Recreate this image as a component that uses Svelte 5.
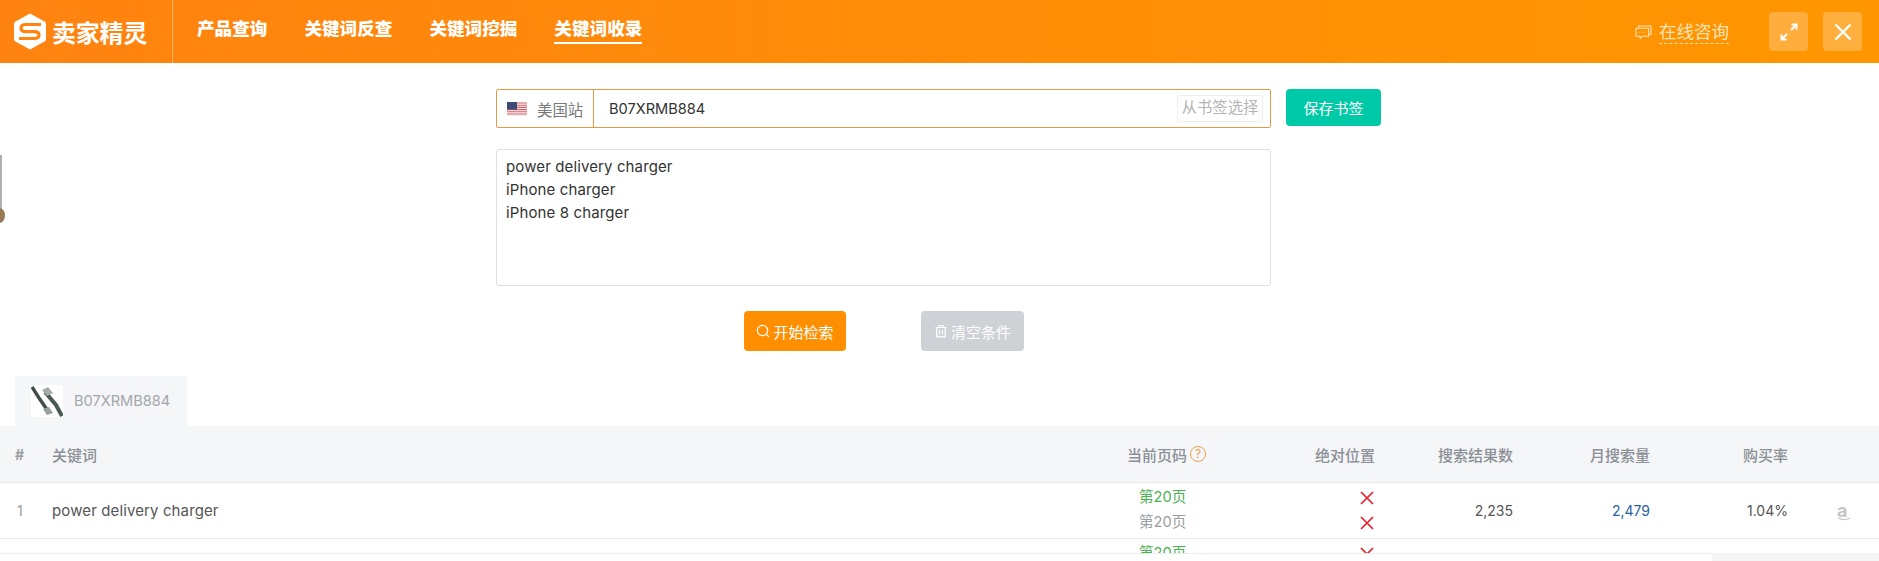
<script>
  const navItems = ['产品查询', '关键词反查', '关键词挖掘', '关键词收录'];
  const activeNav = '关键词收录';
  const keywords = ['power delivery charger', 'iPhone charger', 'iPhone 8 charger'];
</script>

<div class="page">
  <span class="edge-mark"></span>

  <header class="topbar">
    <div class="brand">
      <svg class="logo" viewBox="0 0 32 37" width="32" height="37">
        <path d="M16 0.5 L30.5 8.5 Q32 9.4 32 11 V26 Q32 27.6 30.5 28.5 L16 36.5 L1.5 28.5 Q0 27.6 0 26 V11 Q0 9.4 1.5 8.5 Z" fill="#fff" />
        <path d="M27 11.5 H12 Q7 11.5 7 15.2 Q7 18.6 12 18.6 H20 Q25 18.6 25 22 Q25 25.5 20 25.5 H5" fill="none" stroke="#ff8410" stroke-width="3.2" />
      </svg>
      <span class="brand-name">卖家精灵</span>
    </div>
    <nav class="nav">
      {#each navItems as item}
        <span class="nav-item" class:active={item === activeNav}>{item}</span>
      {/each}
    </nav>
    <div class="top-right">
      <svg class="chat" viewBox="0 0 17 15" width="17" height="15" fill="none" stroke="#ffe3b8" stroke-width="1.1">
        <path d="M3.5 3 V1 H16 V9.5 H14" />
        <path d="M1 3.2 H13.6 V11.2 H7 L5.4 13.4 L4.6 11.2 H1 Z" />
        <path d="M4 7.2 H10.6" stroke-dasharray="1 1.6" />
      </svg>
      <span class="consult">在线咨询</span>
      <button class="square-btn first" aria-label="expand">
        <svg viewBox="0 0 20 20" width="20" height="20" fill="none" stroke="#fff" stroke-width="2">
          <path d="M12 8 L17 3 M12.5 2.5 H17.5 V7.5" />
          <path d="M8 12 L3 17 M2.5 12.5 V17.5 H7.5" />
        </svg>
      </button>
      <button class="square-btn" aria-label="close">
        <svg viewBox="0 0 20 20" width="20" height="20" fill="none" stroke="#fff" stroke-width="2.4">
          <path d="M2.5 2.5 L17.5 17.5 M17.5 2.5 L2.5 17.5" />
        </svg>
      </button>
    </div>
  </header>

  <section class="search">
    <div class="search-col">
      <div class="asin-row">
        <div class="site">
          <svg class="flag" viewBox="0 0 20 14" width="20" height="14">
            <rect width="20" height="14" fill="#f4f0f0" />
            <path d="M0 1 H20 M0 3.2 H20 M0 5.4 H20 M0 7.6 H20 M0 9.8 H20 M0 12 H20" stroke="#d8666c" stroke-width="1.1" />
            <rect width="10" height="7.6" fill="#3c4a78" />
          </svg>
          <span>美国站</span>
        </div>
        <span class="asin">B07XRMB884</span>
        <span class="pick">从书签选择</span>
      </div>
      <div class="keywords">
        {#each keywords as word}
          <div>{word}</div>
        {/each}
      </div>
    </div>
    <button class="save">保存书签</button>
  </section>

  <div class="actions">
    <button class="act start">
      <svg viewBox="0 0 14 14" width="14" height="14" fill="none" stroke="#fff" stroke-width="1.2">
        <circle cx="6.5" cy="6.5" r="5.2" />
        <path d="M10.3 10.3 L12.8 12.8" />
      </svg>
      开始检索
    </button>
    <button class="act clear">
      <svg viewBox="0 0 14 14" width="14" height="14" fill="none" stroke="#fff" stroke-width="1.2">
        <path d="M1.5 3.5 H12.5 M5 3.5 V1.5 H9 V3.5 M2.8 3.5 V12.8 H11.2 V3.5 M5.5 6 V10.5 M8.5 6 V10.5" />
      </svg>
      清空条件
    </button>
  </div>

  <div class="tab">
    <span class="thumb">
      <svg viewBox="0 0 32 32" width="32" height="32">
        <rect width="32" height="32" fill="#fff" />
        <path d="M1 2 L8 13 L17 26" fill="none" stroke="#3f4d4b" stroke-width="3.4" />
        <path d="M14 7 L25 20 L31 31" fill="none" stroke="#4a5856" stroke-width="4" />
        <path d="M11 5 L17 2 L22 8 L16 11 Z" fill="#a4adab" />
        <path d="M12 24 L18 22 L22 28 L16 30 Z" fill="#98a1a0" />
      </svg>
    </span>
    <span class="tab-asin">B07XRMB884</span>
  </div>

  <div class="table">
    <div class="row head">
      <span class="num">#</span>
      <span class="word">关键词</span>
      <span class="page-no">当前页码 <i class="help">?</i></span>
      <span class="right">绝对位置</span>
      <span class="right">搜索结果数</span>
      <span class="right">月搜索量</span>
      <span class="right">购买率</span>
      <span></span>
    </div>
    <div class="row">
      <span class="num">1</span>
      <span class="word body-word">power delivery charger</span>
      <span class="page-no pages">
        <span class="green">第20页</span>
        <span class="grey">第20页</span>
      </span>
      <span class="right crosses">
        {#each [0, 1] as _}
          <svg viewBox="0 0 14 14" width="14" height="14" fill="none" stroke="#e8212b" stroke-width="1.7">
            <path d="M1 1 L13 13 M13 1 L1 13" />
          </svg>
        {/each}
      </span>
      <span class="right val">2,235</span>
      <span class="right val blue">2,479</span>
      <span class="right val">1.04%</span>
      <span class="amz">a<svg viewBox="0 0 14 4" width="14" height="4" fill="none" stroke="#c4c4c4" stroke-width="1.1"><path d="M1 0.8 Q7 4.4 13 1" /></svg></span>
    </div>
    <div class="row">
      <span class="num"></span>
      <span class="word"></span>
      <span class="page-no pages"><span class="green">第20页</span></span>
      <span class="right crosses">
        <svg viewBox="0 0 14 14" width="14" height="14" fill="none" stroke="#e8212b" stroke-width="1.7">
          <path d="M1 1 L13 13 M13 1 L1 13" />
        </svg>
      </span>
    </div>
  </div>

  <div class="bottom">
    <div class="bottom-left"></div>
    <div class="bottom-right"></div>
  </div>
</div>

<style>
  :global(body) {
    margin: 0;
    background: #fff;
    overflow: hidden;
  }
  .page {
    position: relative;
    width: 1879px;
    height: 561px;
    overflow: hidden;
    font-family: Inter, "Noto Sans CJK SC", sans-serif;
    font-size: 14px;
    color: #555;
  }
  .edge-mark {
    position: absolute;
    left: 0;
    top: 155px;
    width: 2px;
    height: 60px;
    background: #b0b0b0;
  }
  .edge-mark::after {
    content: '';
    position: absolute;
    left: -6px;
    bottom: -8px;
    width: 11px;
    height: 15px;
    border-radius: 50%;
    background: #9a7a55;
  }
  .topbar {
    height: 63px;
    display: flex;
    align-items: stretch;
    background: linear-gradient(90deg, #ff8310, #ff9600);
    color: #fff;
  }
  .brand {
    width: 173px;
    box-sizing: border-box;
    padding-left: 14px;
    display: flex;
    align-items: center;
    gap: 6px;
    border-right: 1px solid #ffb26a;
  }
  .brand-name {
    font-size: 24px;
    font-weight: 700;
    letter-spacing: -0.2px;
    white-space: nowrap;
  }
  .nav {
    display: flex;
    align-items: center;
    gap: 37px;
    padding-left: 24px;
  }
  .nav-item {
    font-size: 17.6px;
    font-weight: 900;
    line-height: 27px;
    margin-bottom: 4px;
    border-bottom: 2px solid transparent;
  }
  .nav-item.active {
    border-bottom-color: #fff;
  }
  .top-right {
    margin-left: auto;
    display: flex;
    align-items: center;
    padding-right: 17px;
  }
  .chat {
    margin-right: 7px;
    margin-top: 2px;
  }
  .consult {
    font-size: 17.5px;
    line-height: 23px;
    color: #ffe3b8;
    border-bottom: 1px dashed #ffe3b8;
    margin-right: 40px;
  }
  .square-btn {
    width: 39px;
    height: 39px;
    padding: 0;
    border: 0;
    border-radius: 4px;
    background: rgba(255, 255, 255, 0.24);
    display: flex;
    align-items: center;
    justify-content: center;
  }
  .square-btn.first {
    margin-right: 15px;
  }
  .search {
    display: flex;
    gap: 15px;
    align-items: flex-start;
    padding: 26px 0 0 496px;
  }
  .search-col {
    width: 775px;
    display: flex;
    flex-direction: column;
    gap: 21px;
  }
  .asin-row {
    height: 39px;
    box-sizing: border-box;
    border: 1px solid #e79a42;
    border-radius: 2px;
    display: flex;
    align-items: center;
  }
  .site {
    width: 97px;
    height: 100%;
    box-sizing: border-box;
    padding-left: 10px;
    display: flex;
    align-items: center;
    gap: 10px;
    border-right: 1px solid #e79a42;
    font-size: 15.4px;
    color: #777;
  }
  .asin {
    margin-left: 15px;
    font-size: 14.6px;
    color: #333;
  }
  .pick {
    margin-left: auto;
    margin-right: 7px;
    width: 86px;
    height: 27px;
    box-sizing: border-box;
    border: 1px solid #eee;
    border-radius: 2px;
    font-size: 15.4px;
    line-height: 24px;
    text-align: center;
    color: #b5b5b5;
    white-space: nowrap;
  }
  .keywords {
    height: 137px;
    box-sizing: border-box;
    padding: 5px 9px;
    border: 1px solid #dcdfe3;
    border-radius: 3px;
    line-height: 23px;
    font-size: 15px;
    letter-spacing: 0.12px;
    color: #333;
  }
  .save {
    width: 95px;
    height: 37px;
    padding: 0;
    border: 0;
    border-radius: 4px;
    background: #00c9a7;
    color: #fff;
    font: 15px "Noto Sans CJK SC", sans-serif;
  }
  .actions {
    display: flex;
    gap: 75px;
    padding: 25px 0 0 744px;
  }
  .act {
    width: 102px;
    height: 40px;
    padding: 0;
    border: 0;
    border-radius: 4px;
    color: #fff;
    font: 15px "Noto Sans CJK SC", sans-serif;
    display: flex;
    align-items: center;
    justify-content: center;
    gap: 3px;
  }
  .start {
    background: #ff8f00;
  }
  .clear {
    width: 103px;
    background: #ced1d6;
  }
  .tab {
    width: 172px;
    height: 50px;
    margin: 25px 0 0 15px;
    box-sizing: border-box;
    padding: 9px 0 0 16px;
    display: flex;
    gap: 11px;
    background: #f5f6f8;
  }
  .thumb {
    width: 32px;
    height: 32px;
  }
  .tab-asin {
    line-height: 32px;
    color: #a3a6ab;
    font-size: 14.6px;
  }
  .table {
    height: 127px;
    overflow: hidden;
  }
  .row {
    height: 56px;
    box-sizing: border-box;
    display: grid;
    grid-template-columns: 52px 1075px 120px 128px 138px 137px 138px 1fr;
    align-items: center;
    border-bottom: 1px solid #e8e9eb;
  }
  .row > :global(*) {
    white-space: nowrap;
  }
  .head {
    height: 57px;
    background: #f5f6f8;
    color: #8b8f96;
    font-weight: 500;
    font-size: 15px;
  }
  .num {
    padding-left: 17px;
    font-size: 14px;
    color: #9a9da2;
  }
  .head .num {
    padding-left: 15px;
    font-weight: 700;
  }
  .body-word {
    font-size: 15px;
    letter-spacing: 0.12px;
    color: #555;
  }
  .page-no {
    display: flex;
    align-items: center;
    gap: 3px;
  }
  .help {
    width: 16px;
    height: 16px;
    box-sizing: border-box;
    border: 1px solid #e9a24d;
    border-radius: 50%;
    color: #e9a24d;
    font-style: normal;
    font-weight: 400;
    font-size: 12px;
    line-height: 14px;
    text-align: center;
  }
  .pages {
    flex-direction: column;
    align-items: flex-start;
    align-self: start;
    gap: 0;
    padding: 2px 0 0 12px;
    line-height: 25px;
    font-size: 14.6px;
  }
  .green {
    color: #4caf50;
  }
  .grey {
    color: #9a9da2;
  }
  .right {
    text-align: right;
  }
  .crosses {
    align-self: start;
    padding: 8px 1px 0 0;
    display: flex;
    flex-direction: column;
    align-items: flex-end;
    gap: 11px;
  }
  .val {
    color: #555;
  }
  .blue {
    color: #2b5f9e;
  }
  .amz {
    position: relative;
    padding-left: 49px;
    font-size: 18px;
    font-weight: 700;
    line-height: 17px;
    color: #c4c4c4;
  }
  .amz svg {
    position: absolute;
    left: 49px;
    bottom: -2px;
  }
  .bottom {
    display: flex;
    height: 8px;
  }
  .bottom-left {
    width: 1712px;
    border-top: 1px solid #ececee;
    background: #fff;
  }
  .bottom-right {
    flex: 1;
    background: #f4f4f5;
  }
</style>
